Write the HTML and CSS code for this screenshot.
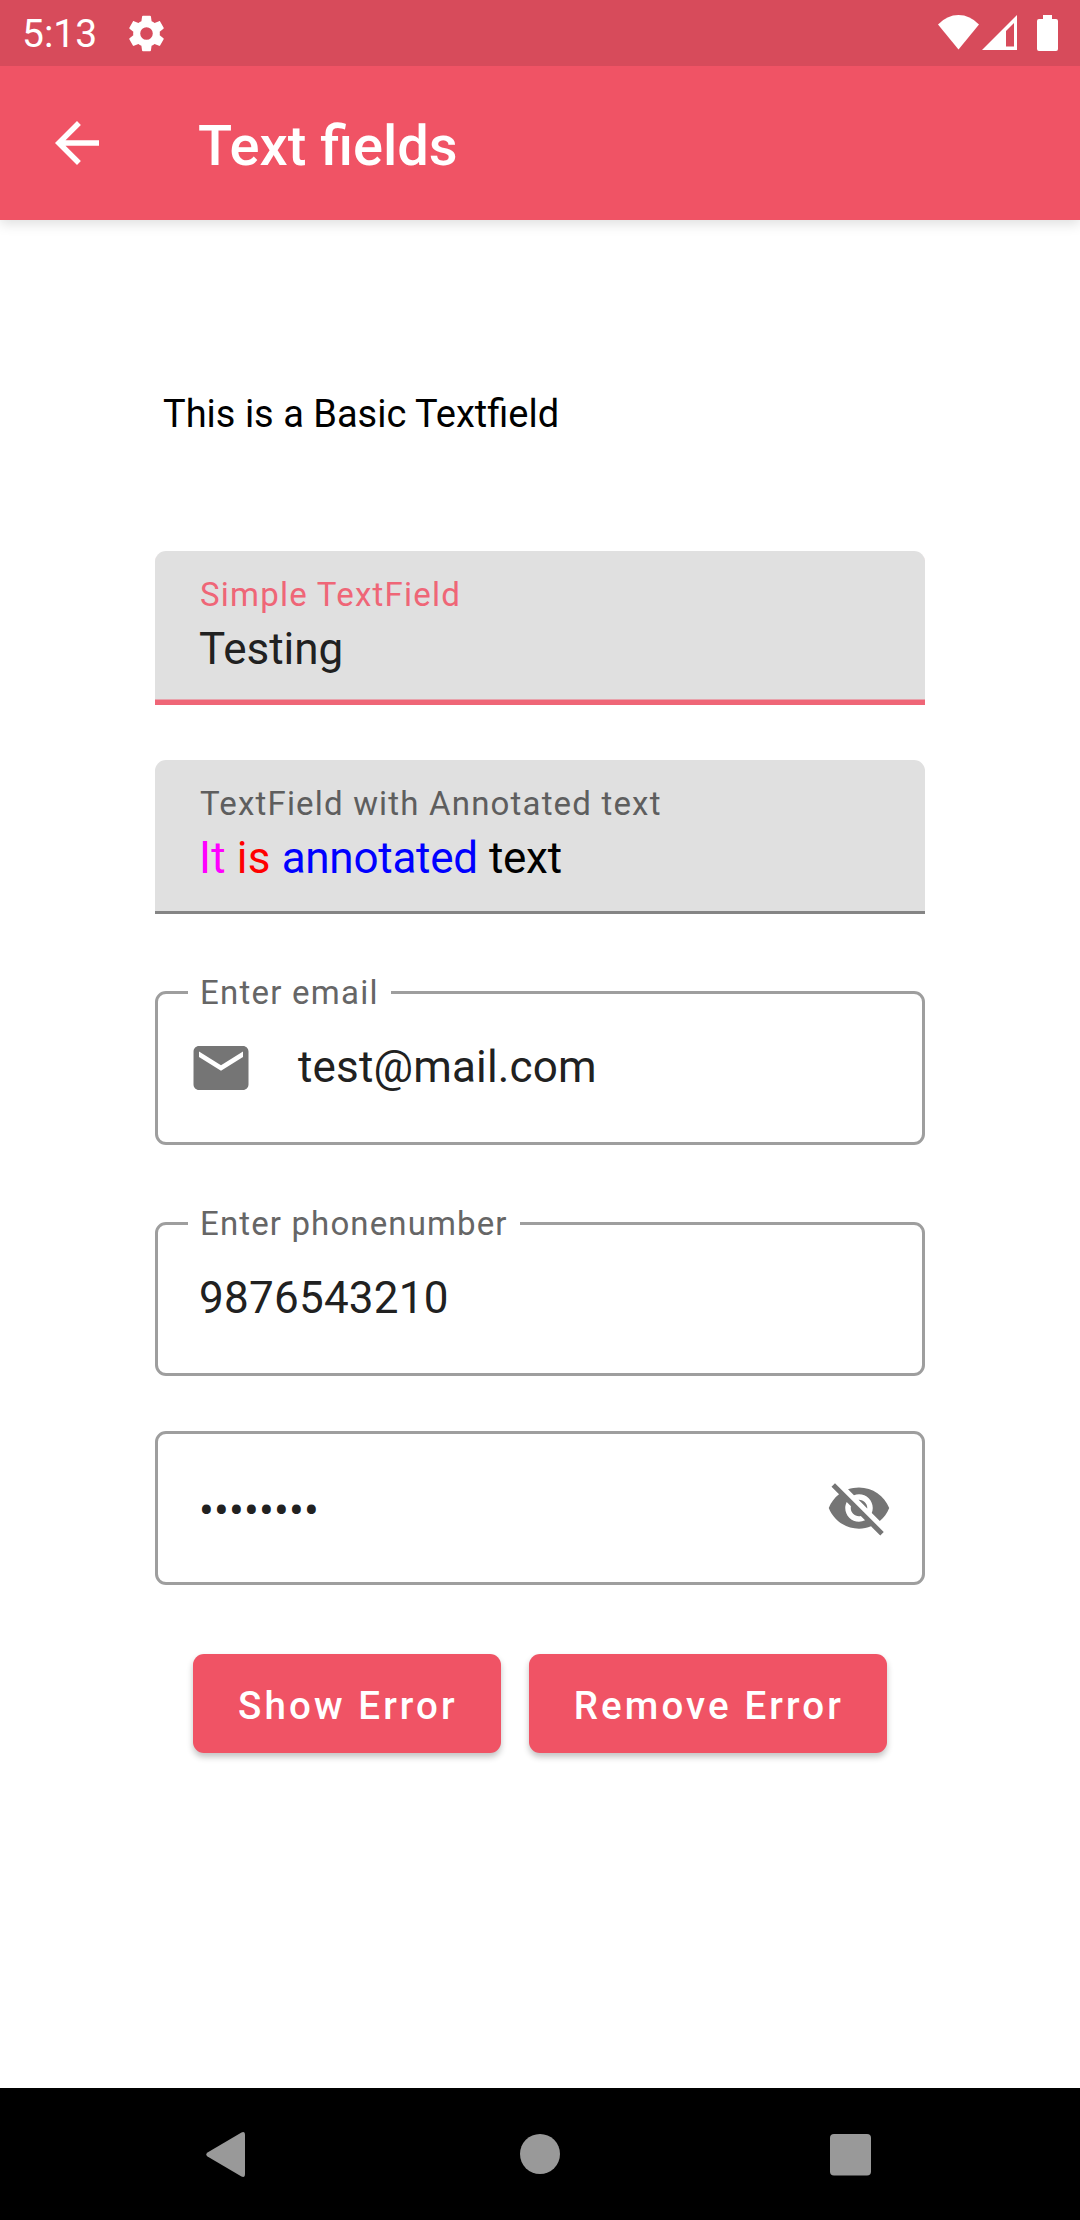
FILE: index.html
```html
<!DOCTYPE html>
<html lang="en">
<head>
<meta charset="utf-8">
<title>Text fields</title>
<link rel="stylesheet" href="styles.css">
</head>
<body>
<div class="screen">
  <header class="status-bar">
    <span class="clock">5:13</span>
    <svg class="settings" viewBox="2 2 20 20"><path d="M19.14 12.94c.04-.3.06-.61.06-.94 0-.32-.02-.64-.07-.94l2.03-1.58c.18-.14.23-.41.12-.61l-1.92-3.32c-.12-.22-.37-.29-.59-.22l-2.39.96c-.5-.38-1.03-.7-1.62-.94L14.4 2.81c-.04-.24-.24-.41-.48-.41h-3.84c-.24 0-.43.17-.47.41L9.25 5.35c-.59.24-1.13.57-1.62.94L5.24 5.33c-.22-.08-.47 0-.59.22L2.74 8.87c-.12.21-.08.47.12.61l2.03 1.58c-.05.3-.09.63-.09.94s.02.64.07.94l-2.03 1.58c-.18.14-.23.41-.12.61l1.92 3.32c.12.22.37.29.59.22l2.39-.96c.5.38 1.03.7 1.62.94l.36 2.54c.05.24.24.41.48.41h3.84c.24 0 .44-.17.47-.41l.36-2.54c.59-.24 1.13-.56 1.62-.94l2.39.96c.22.08.47 0 .59-.22l1.92-3.32c.12-.22.07-.47-.12-.61l-2.01-1.58zM12 15.4a3.4 3.4 0 1 1 0-6.8 3.4 3.4 0 0 1 0 6.8z" fill-rule="evenodd"/></svg>
    <svg class="indicators" viewBox="0 0 120 36">
      <path d="M0 9.500Q9 0 20.500 0Q32 0 41 9.500L20.500 34.500Z"/>
      <path fill-rule="evenodd" d="M44 35L79 0V35ZM68 16V31.500H76V8Z"/>
      <path d="M105 0h9v4h4q2 0 2 2v28q0 2-2 2h-17q-2 0-2-2V6q0-2 2-2h4z"/>
    </svg>
  </header>
  <div class="app-bar">
    <svg class="back" viewBox="0 0 24 24"><path d="M20 11H7.830l5.590-5.590L12 4l-8 8 8 8 1.410-1.410L7.830 13H20v-2z"/></svg>
    <h1 class="title">Text fields</h1>
  </div>
  <main class="content">
    <p class="basic">This is a Basic Textfield</p>
    <div class="field filled focused">
      <label class="label">Simple TextField</label>
      <div class="value">Testing</div>
    </div>
    <div class="field filled">
      <label class="label annotated-label">TextField with Annotated text</label>
      <div class="value annotated"><span class="magenta">It</span> <span class="red">is</span> <span class="blue">annotated</span> <span class="plain">text</span></div>
    </div>
    <div class="field outlined labelled">
      <label class="label">Enter email</label>
      <svg class="icon mail" viewBox="0 0 24 24"><path d="M20 4H4c-1.100 0-1.990.9-1.990 2L2 18c0 1.100.9 2 2 2h16c1.100 0 2-.9 2-2V6c0-1.100-.9-2-2-2zm0 4l-8 5-8-5V6l8 5 8-5v2z"/></svg>
      <div class="value">test@mail.com</div>
    </div>
    <div class="field outlined labelled">
      <label class="label phone-label">Enter phonenumber</label>
      <div class="value digits">9876543210</div>
    </div>
    <div class="field outlined">
      <div class="value password">••••••••</div>
      <svg class="icon eye" viewBox="0 0 24 24"><path d="M12 7c2.760 0 5 2.240 5 5 0 .65-.13 1.260-.36 1.830l2.920 2.920c1.510-1.260 2.700-2.890 3.430-4.750-1.730-4.390-6-7.500-11-7.500-1.400 0-2.740.25-3.980.7l2.160 2.160C10.740 7.130 11.350 7 12 7zM2 4.270l2.280 2.280.46.46C3.080 8.300 1.780 10.020 1 12c1.730 4.390 6 7.500 11 7.500 1.550 0 3.030-.3 4.380-.84l.42.42L19.730 22 21 20.730 3.270 3 2 4.270zM7.530 9.800l1.550 1.550c-.05.21-.08.43-.08.65 0 1.660 1.340 3 3 3 .22 0 .44-.03.65-.08l1.550 1.550c-.67.33-1.410.53-2.200.53-2.760 0-5-2.240-5-5 0-.79.2-1.530.53-2.200zm4.310-.78l3.150 3.150.02-.16c0-1.660-1.340-3-3-3l-.17.01z"/></svg>
    </div>
    <div class="actions">
      <button class="button">Show Error</button>
      <button class="button">Remove Error</button>
    </div>
  </main>
  <nav class="nav-bar">
    <svg class="nav-icons" viewBox="206 2130 665 50">
      <path d="M207.500 2152.500L241.500 2132.500Q245 2131 245 2135V2174Q245 2178 241.500 2176.500L207.500 2156.500Q205 2154.500 207.500 2152.500Z"/>
      <circle cx="540" cy="2154" r="20"/>
      <rect x="830" y="2134" width="41" height="41.500" rx="4"/>
    </svg>
  </nav>
</div>
</body>
</html>
```
FILE: styles.css
```css
* { box-sizing: border-box; }

body {
  margin: 0;
  background: #fff;
  font-family: Roboto, sans-serif;
}

.screen {
  display: flex;
  flex-direction: column;
  width: 1080px;
  height: 2220px;
  overflow: hidden;
}

.status-bar,
.app-bar,
.nav-bar { flex-shrink: 0; }

.status-bar {
  display: flex;
  align-items: flex-start;
  height: 66px;
  padding: 15px 22px 0;
  background: #d74b5b;
  color: #fff;
  fill: #fff;
}

.clock {
  width: 76px;
  margin-top: -4px;
  font-size: 39px;
  line-height: 46px;
}

.settings {
  width: 37px;
  height: 37px;
  margin: 0 auto 0 30px;
}

.indicators {
  width: 120px;
  height: 36px;
}

.app-bar {
  display: flex;
  align-items: center;
  height: 154px;
  padding-left: 44px;
  background: #f05365;
  color: #fff;
  fill: #fff;
  box-shadow: 0 4px 12px rgba(0, 0, 0, 0.13);
  clip-path: inset(0 0 -20px 0);
}

.back {
  width: 66px;
  height: 66px;
}

.title {
  margin: 6px 0 0 88px;
  font-size: 56px;
  font-weight: 500;
  line-height: 64px;
}

.content {
  flex: 1;
  width: 770px;
  margin: 0 auto;
  padding-top: 172px;
}

.basic {
  margin: 0 0 115px;
  padding-left: 8px;
  font-size: 38px;
  line-height: 44px;
  color: #000;
}

.field {
  position: relative;
  height: 154px;
  margin-bottom: 55px;
}

.label {
  display: block;
  font-size: 33px;
  line-height: 40px;
  letter-spacing: 1.24px;
  color: #666;
}

.annotated-label { letter-spacing: 1.18px; }
.phone-label { letter-spacing: 1.13px; }

.value {
  font-size: 44px;
  line-height: 52px;
  letter-spacing: 0.17px;
  color: #212121;
}

.digits {
  margin-left: -1px;
  letter-spacing: 0.25px;
}

.filled {
  padding: 24px 45px 0;
  border-bottom: 3px solid #858585;
  border-radius: 11px 11px 0 0;
  background: #e0e0e0;
}

.filled .label { color: #5e5e5e; }
.filled .value { margin: 8px 0 0 -1px; }

.focused {
  border-bottom: 5px solid #ef6677;
  box-shadow: inset 0 -1px #e8a3ac;
}

.focused .value { letter-spacing: 0; }
.filled.focused .label { color: #ef6677; }
.filled .annotated { color: #000; }
.magenta { color: #f0f; }
.red { color: #f00; }
.blue { color: #00f; letter-spacing: -0.25px; }
.plain { letter-spacing: -0.3px; }

.outlined {
  display: flex;
  align-items: flex-start;
  padding: 47px 30px 0 42px;
  border: 3px solid #9e9e9e;
  border-radius: 11px;
}

.labelled { margin-top: 77px; }

/* Sits on the top border and opens the notch in the outline. */
.outlined .label {
  position: absolute;
  top: -21px;
  left: 30px;
  padding: 0 12px;
  background: #fff;
}

.password { margin: 4px 0 0 -1px; }

.icon {
  width: 66px;
  height: 66px;
  fill: #757575;
}

.mail { margin: -6px 44px 0 -12px; }
.eye { margin: -6px 0 0 auto; }

.actions {
  display: flex;
  justify-content: center;
  gap: 28px;
  padding-top: 14px;
}

.button {
  height: 99px;
  padding: 4px 43px 0 45px;
  border: 0;
  border-radius: 11px;
  background: #f05365;
  box-shadow: 0 4px 6px rgba(0, 0, 0, 0.24);
  color: #fff;
  font: 500 38.5px/46px Roboto, sans-serif;
  letter-spacing: 3.1px;
}

.nav-bar {
  display: flex;
  align-items: flex-start;
  height: 132px;
  padding: 42px 0 0 206px;
  background: #000;
}

.nav-icons {
  width: 665px;
  height: 50px;
  fill: #999;
}
```
